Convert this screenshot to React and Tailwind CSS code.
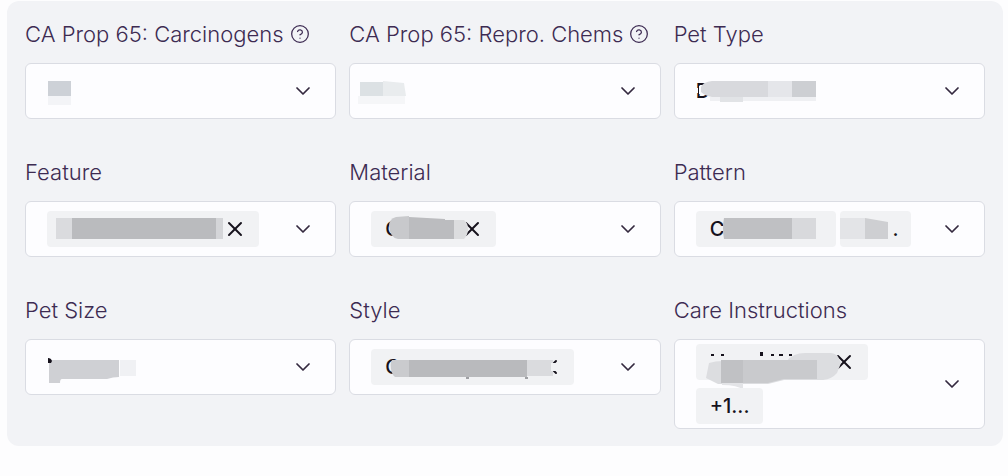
import { useId } from 'react';
import { ChevronDown, HelpCircle, X } from 'lucide-react';

// masks are drawn in the value area's own coordinates, 36px tall
const MASKS = {
  carcinogens: [
    ['M1 8h23v15H1z', '#cdd1d7'],
    ['M1 23h23v9H1z', '#f3f4f7'],
  ],
  repro: [
    ['M-11 9h23v14h-23z', '#dce1e4'],
    ['M12 8l21 2 2 13H12z', '#e9ecee'],
    ['M-13 23h47v8h-47z', '#f5f6f8'],
  ],
  petType: [
    ['M3 13h9v8H3zM-2 15h4v5h-4z', '#fdfdff'],
    ['M5 14Q7 9 16 8H72V24H16Q9 23 5 19z', '#d8d9dd'],
    ['M72 8h24v16H72z', '#e5e6ea'],
    ['M96 8h24v16H96z', '#cdcfd3'],
    ['M14 24h106v4H14z', '#eff0f3'],
    ['M24 24h23v5H24z', '#e1e3e6'],
  ],
  feature: [
    ['M9 7h16v21H9z', '#dadbde'],
    ['M25 7h144v21H25z', '#babbbe'],
    ['M169 7h7v21h-7z', '#d4d5d8'],
  ],
  material: [
    ['M18 15Q18 8 25 6L38 5V28H27Q19 27 18 15z', '#c8c9cc'],
    ['M38 6l36 2v1h9v19H38z', '#bbbcbf'],
    ['M83 9h10q4 3 4 9t-4 10H83z', '#dcdddf'],
  ],
  pattern: [
    ['M28 7H96V28H28Q26 17 28 7z', '#bfc0c3'],
    ['M96 7h24v21H96z', '#d8d9dc'],
  ],
  patternMore: [
    ['M0 7h25v21H0z', '#e3e4e7'],
    ['M25 7l23 4v17H25z', '#cecfd2'],
  ],
  petSize: [
    ['M2 11h70v17q-6 0-12 2H15q-2 0-2 4H2z', '#cfd0d4'],
    ['M73 11h16v16H73z', '#f0f1f4'],
    ['M1 9q3 0 4 3l-1 2H1z', '#16121c'],
  ],
  style: [
    ['M21 11h17v17H24q-3-2-4-8t1-9z', '#cacbce'],
    ['M38 11h118v17H38z', '#b9babd'],
    ['M156 11h26v16h-26z', '#dadbde'],
    ['M180 14h7v8h-7zM170 8h13v3h-13zM170 27h13v3h-13z', '#f1f2f4'],
    ['M95 28h3v2h-3zM154 28h3v2h-3z', '#9fa0a4'],
  ],
  care: [
    ['M10 34l3-15q6-2 14-2h64q6-8 18-8h26q7 1 8 6l2 4-4 10q-5 6-14 7H88l-16 4H22z', '#dcdde0'],
    ['M25 16h96v19H88l-16 4H25z', '#c9cacd'],
    ['M25 16h22v23H25z', '#c0c1c4'],
    ['M26 39h21v7q-5-5-21-5z', '#e3e4e7'],
    ['M15 10h3v2h-3zM25 10h3v2h-3zM64 8h3v4h-3zM75 10h3v2h-3zM83 10h4v2h-4zM93 10h3v2h-3z', '#16121c'],
  ],
};

const FIELDS = [
  { label: 'CA Prop 65: Carcinogens', help: true, values: [{ mask: 'carcinogens', width: 'w-6' }] },
  { label: 'CA Prop 65: Repro. Chems', help: true, values: [{ mask: 'repro', width: 'w-9' }] },
  { label: 'Pet Type', values: [{ text: 'D', mask: 'petType', width: 'w-30' }] },
  { label: 'Feature', values: [{ chip: true, mask: 'feature', width: 'w-[212px]', remove: true }] },
  { label: 'Material', values: [{ chip: true, text: 'C', mask: 'material', width: 'w-[125px]', remove: true }] },
  {
    label: 'Pattern',
    values: [
      { chip: true, text: 'C', mask: 'pattern', width: 'w-[140px]' },
      { chip: true, text: '.', mask: 'patternMore', width: 'w-[71px]', end: true },
    ],
  },
  { label: 'Pet Size', values: [{ mask: 'petSize', width: 'w-22' }] },
  { label: 'Style', values: [{ chip: true, text: 'C', mask: 'style', width: 'w-[203px]', remove: true }] },
  {
    label: 'Care Instructions',
    stacked: true,
    values: [
      { chip: true, mask: 'care', width: 'w-[172px]', remove: true },
      { chip: true, text: '+1...', width: 'w-[67px]' },
    ],
  },
];

function Mask({ name }) {
  return (
    <svg className="absolute inset-0 h-full w-full overflow-visible" aria-hidden="true">
      {MASKS[name].map(([d, fill]) => <path key={d} d={d} fill={fill} />)}
    </svg>
  );
}

function Value({ value }) {
  return (
    <div className={`relative flex h-9 shrink-0 items-center ${value.width} ${value.chip ? 'rounded bg-[#f1f2f4] pr-3 pl-3.5' : ''} ${value.end ? 'justify-end' : ''}`}>
      {value.text && <span className="text-xl font-medium text-[#16121c]">{value.text}</span>}
      {value.remove && (
        <button type="button" aria-label="Remove" className="pointer-events-auto ml-auto cursor-pointer text-[#16121c]">
          <X size={24} strokeWidth={2} />
        </button>
      )}
      {value.mask && <Mask name={value.mask} />}
    </div>
  );
}

function Field({ field }) {
  const id = useId();
  return (
    <div>
      <div className="mb-[15px] flex h-7 items-center gap-1.5 text-[#3d2b52]">
        <label htmlFor={id} className="text-[22px] font-light whitespace-nowrap">{field.label}</label>
        {field.help && (
          <button type="button" aria-label={`About ${field.label}`} className="cursor-pointer">
            <HelpCircle size={20} strokeWidth={1.5} />
          </button>
        )}
      </div>
      <div className="relative flex min-h-14 items-center rounded-md border border-[#dadce3] bg-[#fdfdff] py-1 pr-5 pl-[21px]">
        <select id={id} className="absolute inset-0 h-full w-full cursor-pointer appearance-none rounded-md bg-transparent">
          <option value=""></option>
        </select>
        <div className={`pointer-events-none relative flex min-w-0 flex-1 ${field.stacked ? 'flex-col items-start gap-2' : 'gap-1'}`}>
          {field.values.map((value, i) => <Value key={i} value={value} />)}
        </div>
        <ChevronDown size={24} strokeWidth={1.75} className="pointer-events-none relative shrink-0 text-[#34293f]" />
      </div>
    </div>
  );
}

export default function App() {
  return (
    <main className="min-h-screen bg-[#fdfdfe] pt-px pr-[5px] pl-[7px] font-[Inter,sans-serif]">
      <form className="grid grid-cols-1 items-start gap-x-[13px] gap-y-[39px] rounded-xl bg-[#f2f3f6] px-[18px] pt-[19px] pb-[17px] sm:grid-cols-3">
        {FIELDS.map(field => <Field key={field.label} field={field} />)}
      </form>
    </main>
  );
}
